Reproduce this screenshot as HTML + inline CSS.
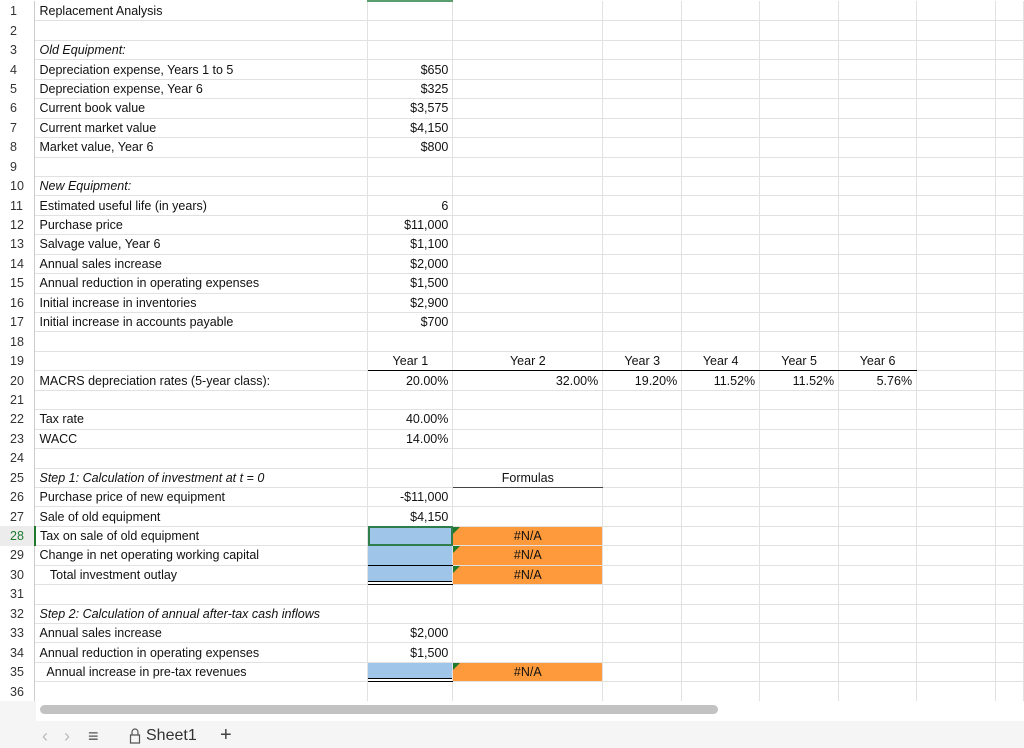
<!DOCTYPE html>
<html><head><meta charset="utf-8"><style>
body{margin:0;width:1024px;height:748px;overflow:hidden;background:#fff;font-family:"Liberation Sans",Arial,sans-serif;font-size:12.5px;color:#111;position:relative}
table{border-collapse:collapse;table-layout:fixed;position:absolute;left:0;top:0}
td{height:18.44px;padding:0 4px;border-right:1px solid #e1e1e1;border-bottom:1px solid #e1e1e1;white-space:nowrap;overflow:hidden;line-height:18px}
td.n{color:#333;border-right:1px solid #ccc;border-bottom:none;padding:0 0 0 10px;font-size:12.5px}
td.r{text-align:right}td.c{text-align:center}
i{font-style:italic}
.b{background:#9fc5e8}.o{background:#ff9a3c;text-align:center;position:relative}
.o::before{content:"";position:absolute;left:0;top:0;border-top:7px solid #1f7a2e;border-right:7px solid transparent}
.ul{border-bottom:1px solid #000}
.dbl{border-bottom:1px solid #000;box-shadow:inset 0 -2px 0 #fff,inset 0 -3px 0 #000}
</style></head><body>
<table>
<colgroup><col style="width:35px"><col style="width:333px"><col style="width:85px"><col style="width:150px"><col style="width:79px"><col style="width:78px"><col style="width:79px"><col style="width:78px"><col style="width:79px"><col style="width:28px"></colgroup>
<tr><td class="n">1</td><td>Replacement Analysis</td><td style="border-top:2px solid #5a9e6f"></td><td></td><td></td><td></td><td></td><td></td><td></td><td></td></tr>
<tr><td class="n">2</td><td></td><td></td><td></td><td></td><td></td><td></td><td></td><td></td><td></td></tr>
<tr><td class="n">3</td><td><i>Old Equipment:</i></td><td></td><td></td><td></td><td></td><td></td><td></td><td></td><td></td></tr>
<tr><td class="n">4</td><td>Depreciation expense, Years 1 to 5</td><td class="r">$650</td><td></td><td></td><td></td><td></td><td></td><td></td><td></td></tr>
<tr><td class="n">5</td><td>Depreciation expense, Year 6</td><td class="r">$325</td><td></td><td></td><td></td><td></td><td></td><td></td><td></td></tr>
<tr><td class="n">6</td><td>Current book value</td><td class="r">$3,575</td><td></td><td></td><td></td><td></td><td></td><td></td><td></td></tr>
<tr><td class="n">7</td><td>Current market value</td><td class="r">$4,150</td><td></td><td></td><td></td><td></td><td></td><td></td><td></td></tr>
<tr><td class="n">8</td><td>Market value, Year 6</td><td class="r">$800</td><td></td><td></td><td></td><td></td><td></td><td></td><td></td></tr>
<tr><td class="n">9</td><td></td><td></td><td></td><td></td><td></td><td></td><td></td><td></td><td></td></tr>
<tr><td class="n">10</td><td><i>New Equipment:</i></td><td></td><td></td><td></td><td></td><td></td><td></td><td></td><td></td></tr>
<tr><td class="n">11</td><td>Estimated useful life (in years)</td><td class="r">6</td><td></td><td></td><td></td><td></td><td></td><td></td><td></td></tr>
<tr><td class="n">12</td><td>Purchase price</td><td class="r">$11,000</td><td></td><td></td><td></td><td></td><td></td><td></td><td></td></tr>
<tr><td class="n">13</td><td>Salvage value, Year 6</td><td class="r">$1,100</td><td></td><td></td><td></td><td></td><td></td><td></td><td></td></tr>
<tr><td class="n">14</td><td>Annual sales increase</td><td class="r">$2,000</td><td></td><td></td><td></td><td></td><td></td><td></td><td></td></tr>
<tr><td class="n">15</td><td>Annual reduction in operating expenses</td><td class="r">$1,500</td><td></td><td></td><td></td><td></td><td></td><td></td><td></td></tr>
<tr><td class="n">16</td><td>Initial increase in inventories</td><td class="r">$2,900</td><td></td><td></td><td></td><td></td><td></td><td></td><td></td></tr>
<tr><td class="n">17</td><td>Initial increase in accounts payable</td><td class="r">$700</td><td></td><td></td><td></td><td></td><td></td><td></td><td></td></tr>
<tr><td class="n">18</td><td></td><td></td><td></td><td></td><td></td><td></td><td></td><td></td><td></td></tr>
<tr><td class="n">19</td><td></td><td class="c ul">Year 1</td><td class="c ul">Year 2</td><td class="c ul">Year 3</td><td class="c ul">Year 4</td><td class="c ul">Year 5</td><td class="c ul">Year 6</td><td></td><td></td></tr>
<tr><td class="n">20</td><td>MACRS depreciation rates (5-year class):</td><td class="r">20.00%</td><td class="r">32.00%</td><td class="r">19.20%</td><td class="r">11.52%</td><td class="r">11.52%</td><td class="r">5.76%</td><td></td><td></td></tr>
<tr><td class="n">21</td><td></td><td></td><td></td><td></td><td></td><td></td><td></td><td></td><td></td></tr>
<tr><td class="n">22</td><td>Tax rate</td><td class="r">40.00%</td><td></td><td></td><td></td><td></td><td></td><td></td><td></td></tr>
<tr><td class="n">23</td><td>WACC</td><td class="r">14.00%</td><td></td><td></td><td></td><td></td><td></td><td></td><td></td></tr>
<tr><td class="n">24</td><td></td><td></td><td></td><td></td><td></td><td></td><td></td><td></td><td></td></tr>
<tr><td class="n">25</td><td><i>Step 1: Calculation of investment at t = 0</i></td><td></td><td class="c" style="border-bottom:1px solid #444">Formulas</td><td></td><td></td><td></td><td></td><td></td><td></td></tr>
<tr><td class="n">26</td><td>Purchase price of new equipment</td><td class="r">-$11,000</td><td></td><td></td><td></td><td></td><td></td><td></td><td></td></tr>
<tr><td class="n">27</td><td>Sale of old equipment</td><td class="r">$4,150</td><td></td><td></td><td></td><td></td><td></td><td></td><td></td></tr>
<tr><td class="n" style="color:#1f7a2e;background:#ececec">28</td><td style="border-left:2px solid #1f7a2e">Tax on sale of old equipment</td><td class="b" style="outline:2px solid #2e7d4a;outline-offset:-2px"></td><td class="o">#N/A</td><td></td><td></td><td></td><td></td><td></td><td></td></tr>
<tr><td class="n">29</td><td>Change in net operating working capital</td><td class="b ul"></td><td class="o">#N/A</td><td></td><td></td><td></td><td></td><td></td><td></td></tr>
<tr><td class="n">30</td><td>&nbsp;&nbsp;&nbsp;Total investment outlay</td><td class="b dbl"></td><td class="o">#N/A</td><td></td><td></td><td></td><td></td><td></td><td></td></tr>
<tr><td class="n">31</td><td></td><td></td><td></td><td></td><td></td><td></td><td></td><td></td><td></td></tr>
<tr><td class="n">32</td><td><i>Step 2: Calculation of annual after-tax cash inflows</i></td><td></td><td></td><td></td><td></td><td></td><td></td><td></td><td></td></tr>
<tr><td class="n">33</td><td>Annual sales increase</td><td class="r">$2,000</td><td></td><td></td><td></td><td></td><td></td><td></td><td></td></tr>
<tr><td class="n">34</td><td>Annual reduction in operating expenses</td><td class="r">$1,500</td><td></td><td></td><td></td><td></td><td></td><td></td><td></td></tr>
<tr><td class="n">35</td><td>&nbsp;&nbsp;Annual increase in pre-tax revenues</td><td class="b dbl"></td><td class="o">#N/A</td><td></td><td></td><td></td><td></td><td></td><td></td></tr>
<tr><td class="n">36</td><td></td><td></td><td></td><td></td><td></td><td></td><td></td><td></td><td></td></tr>
</table>
<div style="position:absolute;left:0;top:701px;width:1024px;height:47px;background:#f5f5f5"></div>
<div style="position:absolute;left:36px;top:701px;width:988px;height:20px;background:#fff"></div>
<div style="position:absolute;left:40px;top:705px;width:678px;height:9px;background:#c2c2c2;border-radius:5px"></div>
<div style="position:absolute;left:42px;top:726px;font-size:18px;color:#bbb">&lsaquo;</div>
<div style="position:absolute;left:54px;top:726px;font-size:18px;color:#bbb">&nbsp;&nbsp;&rsaquo;</div>
<div style="position:absolute;left:88px;top:726px;font-size:18px;color:#555">&equiv;</div>
<svg style="position:absolute;left:129px;top:728px" width="12" height="16"><path d="M3 7V4a3 3 0 0 1 6 0v3M1.5 7h9v8h-9z" fill="none" stroke="#555" stroke-width="1.2"/></svg>
<div style="position:absolute;left:146px;top:727px;font-size:16px;color:#333">Sheet1</div>
<div style="position:absolute;left:220px;top:724px;font-size:20px;color:#444">+</div>
</body></html>
